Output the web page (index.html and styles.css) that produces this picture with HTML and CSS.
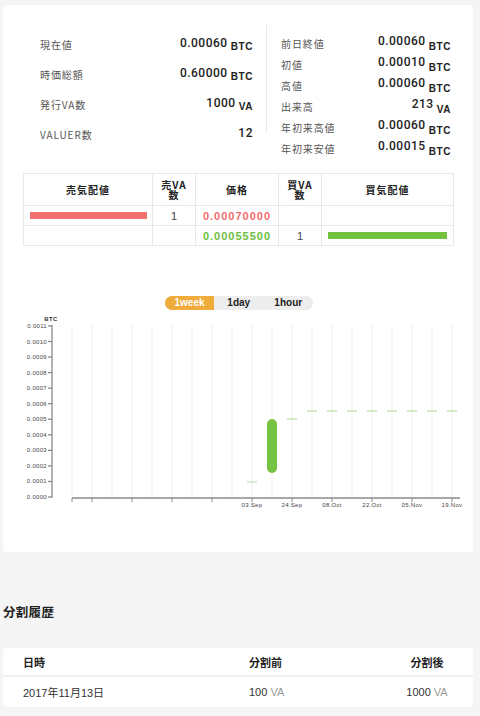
FILE: index.html
```html
<!DOCTYPE html>
<html lang="ja">
<head>
<meta charset="utf-8">
<link rel="stylesheet" href="styles.css">
</head>
<body>
<div class="page">
  <div class="card main">
    <div class="stats">
      <div class="col-left">
        <div class="row"><span class="lbl">現在値</span><span class="val"><span class="num">0.00060</span><span class="unit">BTC</span></span></div>
        <div class="row"><span class="lbl">時価総額</span><span class="val"><span class="num">0.60000</span><span class="unit">BTC</span></span></div>
        <div class="row"><span class="lbl">発行VA数</span><span class="val"><span class="num">1000</span><span class="unit">VA</span></span></div>
        <div class="row"><span class="lbl">VALUER数</span><span class="val"><span class="num">12</span></span></div>
      </div>
      <div class="divider"></div>
      <div class="col-right">
        <div class="row"><span class="lbl">前日終値</span><span class="val"><span class="num">0.00060</span><span class="unit">BTC</span></span></div>
        <div class="row"><span class="lbl">初値</span><span class="val"><span class="num">0.00010</span><span class="unit">BTC</span></span></div>
        <div class="row"><span class="lbl">高値</span><span class="val"><span class="num">0.00060</span><span class="unit">BTC</span></span></div>
        <div class="row"><span class="lbl">出来高</span><span class="val"><span class="num">213</span><span class="unit">VA</span></span></div>
        <div class="row"><span class="lbl">年初来高値</span><span class="val"><span class="num">0.00060</span><span class="unit">BTC</span></span></div>
        <div class="row"><span class="lbl">年初来安値</span><span class="val"><span class="num">0.00015</span><span class="unit">BTC</span></span></div>
      </div>
    </div>

    <table class="book">
      <colgroup>
        <col class="c-sell"><col class="c-sva"><col class="c-price"><col class="c-bva"><col class="c-buy">
      </colgroup>
      <thead>
        <tr><th>売気配値</th><th>売VA<br>数</th><th>価格</th><th>買VA<br>数</th><th>買気配値</th></tr>
      </thead>
      <tbody>
        <tr>
          <td class="bar-cell sell"><div class="bar red"></div></td>
          <td class="qty">1</td>
          <td class="price red-text">0.00070000</td>
          <td></td>
          <td></td>
        </tr>
        <tr>
          <td></td>
          <td></td>
          <td class="price green-text">0.00055500</td>
          <td class="qty">1</td>
          <td class="bar-cell buy"><div class="bar green"></div></td>
        </tr>
      </tbody>
    </table>

    <div class="toggle">
      <span class="seg active">1week</span><span class="seg">1day</span><span class="seg">1hour</span>
    </div>

    <svg class="chart" width="470" height="200" viewBox="0 0 470 200">
      <g stroke="#efefef" stroke-width="1">
        <line x1="69" y1="12" x2="69" y2="185"/><line x1="89" y1="12" x2="89" y2="185"/>
        <line x1="109" y1="12" x2="109" y2="185"/><line x1="129" y1="12" x2="129" y2="185"/>
        <line x1="149" y1="12" x2="149" y2="185"/><line x1="169" y1="12" x2="169" y2="185"/>
        <line x1="189" y1="12" x2="189" y2="185"/><line x1="209" y1="12" x2="209" y2="185"/>
        <line x1="229" y1="12" x2="229" y2="185"/><line x1="249" y1="12" x2="249" y2="185"/>
        <line x1="269" y1="12" x2="269" y2="185"/><line x1="289" y1="12" x2="289" y2="185"/>
        <line x1="309" y1="12" x2="309" y2="185"/><line x1="329" y1="12" x2="329" y2="185"/>
        <line x1="349" y1="12" x2="349" y2="185"/><line x1="369" y1="12" x2="369" y2="185"/>
        <line x1="389" y1="12" x2="389" y2="185"/><line x1="409" y1="12" x2="409" y2="185"/>
        <line x1="429" y1="12" x2="429" y2="185"/><line x1="449" y1="12" x2="449" y2="185"/>
      </g>
      <text x="48" y="8" class="ax-title" text-anchor="middle">BTC</text>
      <g stroke="#8a8a8a" stroke-width="1.3">
        <line x1="49" y1="12" x2="49" y2="185"/>
        <line x1="45" y1="12.95" x2="49" y2="12.95"/>
        <line x1="45" y1="28.5" x2="49" y2="28.5"/>
        <line x1="45" y1="44.05" x2="49" y2="44.05"/>
        <line x1="45" y1="59.6" x2="49" y2="59.6"/>
        <line x1="45" y1="75.15" x2="49" y2="75.15"/>
        <line x1="45" y1="90.7" x2="49" y2="90.7"/>
        <line x1="45" y1="106.25" x2="49" y2="106.25"/>
        <line x1="45" y1="121.8" x2="49" y2="121.8"/>
        <line x1="45" y1="137.35" x2="49" y2="137.35"/>
        <line x1="45" y1="152.9" x2="49" y2="152.9"/>
        <line x1="45" y1="168.45" x2="49" y2="168.45"/>
        <line x1="45" y1="184" x2="49" y2="184"/>
      </g>
      <g class="ax-lbl" text-anchor="end">
        <text x="44" y="15">0.0011</text>
        <text x="44" y="30.5">0.0010</text>
        <text x="44" y="46">0.0009</text>
        <text x="44" y="61.6">0.0008</text>
        <text x="44" y="77.1">0.0007</text>
        <text x="44" y="92.7">0.0006</text>
        <text x="44" y="108.2">0.0005</text>
        <text x="44" y="123.8">0.0004</text>
        <text x="44" y="139.3">0.0003</text>
        <text x="44" y="154.9">0.0002</text>
        <text x="44" y="170.4">0.0001</text>
        <text x="44" y="186">0.0000</text>
      </g>
      <g stroke="#8a8a8a" stroke-width="1.5">
        <line x1="69" y1="185" x2="457" y2="185"/>
      </g>
      <g stroke="#8a8a8a" stroke-width="1">
        <line x1="69" y1="185" x2="69" y2="189"/><line x1="89" y1="185" x2="89" y2="189"/>
        <line x1="129" y1="185" x2="129" y2="189"/><line x1="169" y1="185" x2="169" y2="189"/>
        <line x1="209" y1="185" x2="209" y2="189"/><line x1="249" y1="185" x2="249" y2="189"/>
        <line x1="289" y1="185" x2="289" y2="189"/><line x1="329" y1="185" x2="329" y2="189"/>
        <line x1="369" y1="185" x2="369" y2="189"/><line x1="409" y1="185" x2="409" y2="189"/>
        <line x1="449" y1="185" x2="449" y2="189"/>
      </g>
      <g class="ax-lbl" text-anchor="middle">
        <text x="249" y="194">03.Sep</text>
        <text x="289" y="194">24.Sep</text>
        <text x="329" y="194">08.Oct</text>
        <text x="369" y="194">22.Oct</text>
        <text x="409" y="194">05.Nov</text>
        <text x="449" y="194">19.Nov</text>
      </g>
      <line x1="244" y1="169" x2="254" y2="169" stroke="#b9dca3" stroke-width="1"/>
      <rect x="264" y="106" width="10" height="54" rx="5" fill="#76c442"/>
      <g stroke="#a9da8c" stroke-width="1">
        <line x1="284" y1="106" x2="294" y2="106"/>
        <line x1="304" y1="98" x2="314" y2="98"/><line x1="324" y1="98" x2="334" y2="98"/>
        <line x1="344" y1="98" x2="354" y2="98"/><line x1="364" y1="98" x2="374" y2="98"/>
        <line x1="384" y1="98" x2="394" y2="98"/><line x1="404" y1="98" x2="414" y2="98"/>
        <line x1="424" y1="98" x2="434" y2="98"/><line x1="444" y1="98" x2="454" y2="98"/>
      </g>
    </svg>
  </div>

  <h2 class="section-title">分割履歴</h2>
  <div class="card split">
    <div class="split-row head">
      <span class="sc1">日時</span><span class="sc2">分割前</span><span class="sc3">分割後</span>
    </div>
    <div class="split-row">
      <span class="sc1">2017年11月13日</span><span class="sc2">100 <em>VA</em></span><span class="sc3">1000 <em>VA</em></span>
    </div>
  </div>
</div>
</body>
</html>
```

FILE: styles.css
```css
* { box-sizing: border-box; }
html, body { margin: 0; padding: 0; }
body {
  background: #f5f5f5;
  font-family: "Liberation Sans", "Noto Sans CJK JP", sans-serif;
  color: #333;
}
.page { padding: 5px 7px 0 3px; }
.card { background: #fff; border-radius: 4px; }
.main { padding: 0 0 39px 0; }

.stats {
  display: flex;
  align-items: flex-start;
  padding: 20px 21px 0 37px;
}
.col-left { width: 213px; margin-top: 4px; }
.col-left .row { height: 30px; }
.col-right { width: 170px; margin-top: 8px; }
.col-right .row { height: 21px; }
.row { display: flex; align-items: center; justify-content: space-between; }
.divider { width: 1px; height: 108px; background: #e8e8e8; margin: 0 14px 0 13px; }
.lbl {
  font-family: "Noto Sans CJK JP", sans-serif;
  font-size: 10px;
  letter-spacing: 0.9px;
  color: #555;
}
.val { white-space: nowrap; color: #222; }
.num {
  font-family: Roboto, "Liberation Sans", sans-serif;
  font-weight: 500;
  font-size: 12px;
  letter-spacing: 0.5px;
  vertical-align: 2px;
}
.col-right .num { vertical-align: 4px; }
.unit {
  font-family: "Liberation Sans", sans-serif;
  font-weight: bold;
  font-size: 10px;
  letter-spacing: 0.6px;
  margin-left: 3px;
  vertical-align: -1px;
}

.book {
  margin: 14px 20px 0 20px;
  width: 430px;
  border-collapse: collapse;
  table-layout: fixed;
  border: 1px solid #e6e6e6;
}
.c-sell { width: 129px; }
.c-sva { width: 43px; }
.c-price { width: 83px; }
.c-bva { width: 43px; }
.c-buy { width: 132px; }
.book th, .book td { border: 1px solid #e8e8e8; padding: 0; text-align: center; }
.book th {
  height: 32px;
  font-family: "Noto Sans CJK JP", sans-serif;
  font-size: 10px;
  line-height: 10px;
  letter-spacing: 1px;
  font-weight: bold;
  color: #222;
}
.book td { height: 20px; font-size: 11px; color: #444; }
.bar-cell.sell { padding: 0 5px 0 6px; }
.bar-cell.buy { padding: 0 6px 0 6px; }
.bar { height: 7px; }
.bar.red { background: #f07070; }
.bar.green { background: #72c23e; }
.price { font-weight: bold; letter-spacing: 1px; font-size: 11px; }
.red-text { color: #f06c6c !important; }
.green-text { color: #6dbd3d !important; }

.toggle {
  display: flex;
  width: 148px;
  height: 14px;
  margin: 50px auto 0 auto;
  background: #ededed;
  border-radius: 7px;
  overflow: hidden;
  position: relative;
  left: 1px;
}
.seg {
  flex: 1;
  text-align: center;
  font-size: 10px;
  font-weight: bold;
  line-height: 14px;
  color: #222;
}
.seg.active { background: #f0ac3b; color: #fff; flex: 0 0 49px; }
.chart { display: block; margin-top: 3px; }
.ax-lbl { font-family: "Liberation Sans", sans-serif; font-size: 6px; fill: #444; letter-spacing: 0.3px; }
.ax-title { font-family: "Liberation Sans", sans-serif; font-size: 6px; font-weight: bold; fill: #333; letter-spacing: 0.4px; }

.section-title {
  margin: 53px 0 0 0;
  height: 16px;
  line-height: 16px;
  font-size: 12.5px;
  font-weight: bold;
  color: #222;
  letter-spacing: 0.3px;
}
.split { margin-top: 27px; }
.split-row {
  display: grid;
  grid-template-columns: 246px 151px 54px;
  align-items: center;
  height: 30px;
  font-size: 11px;
  color: #333;
}
.split-row.head { height: 29px; border-bottom: 2px solid #f0f0f0; font-weight: bold; color: #222; }
.sc1 { padding-left: 20px; }
.sc3 { text-align: center; white-space: nowrap; }
.split-row em { font-style: normal; color: #9a9a9a; }
```
